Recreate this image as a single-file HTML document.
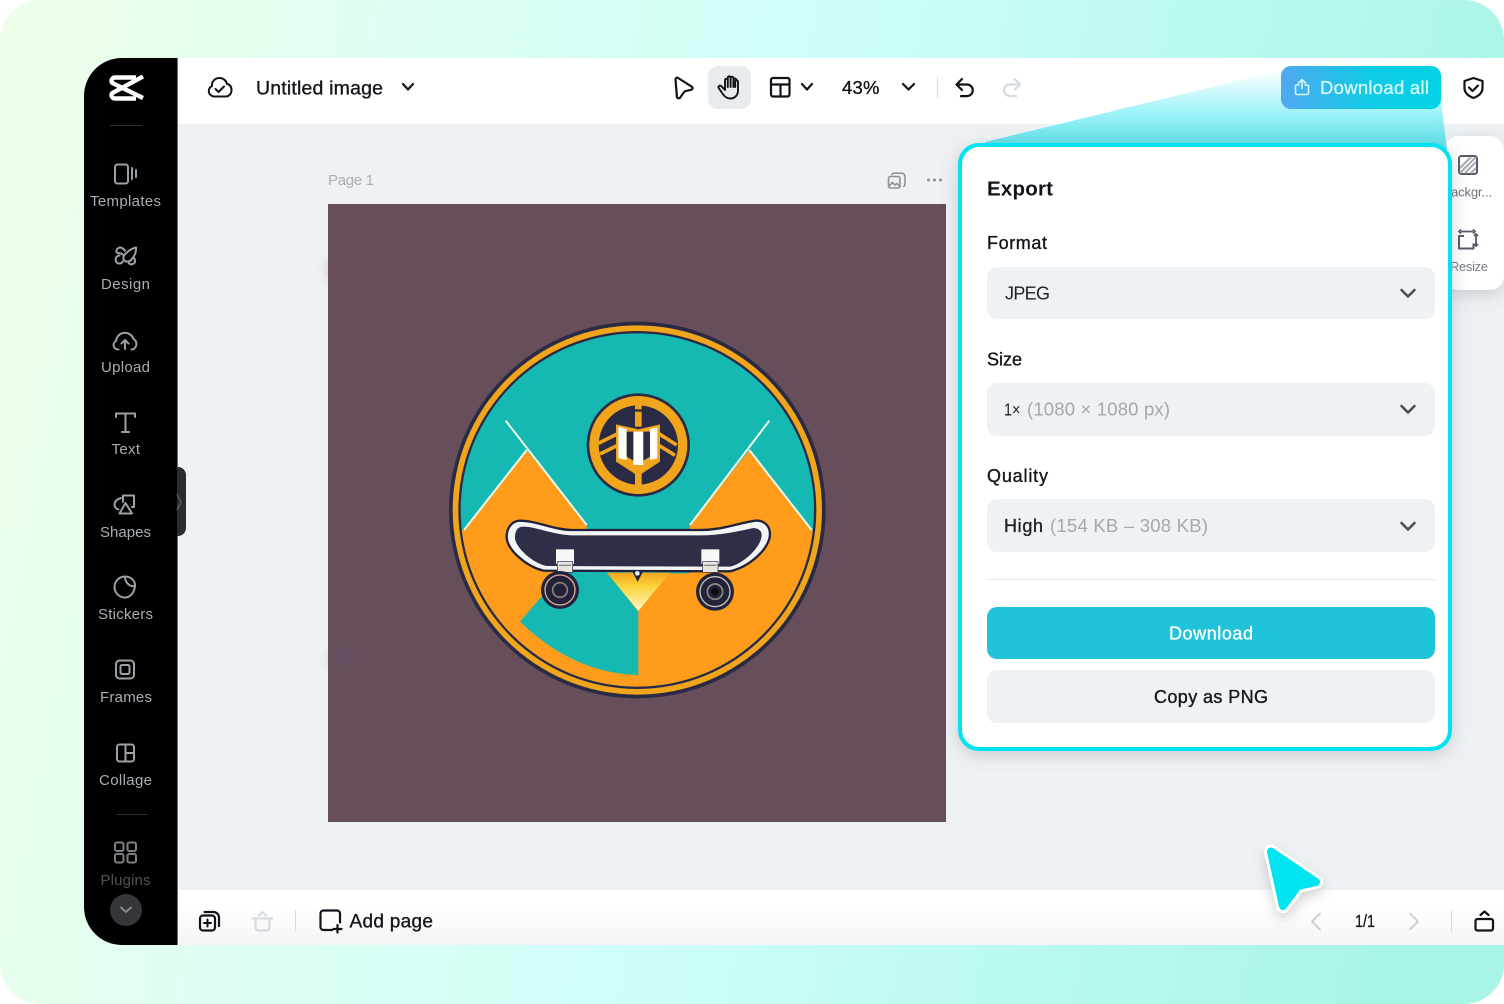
<!DOCTYPE html>
<html lang="en"><head><meta charset="utf-8"><title>Export</title>
<style>
html,body{margin:0;padding:0;background:#fff;width:1504px;height:1004px;overflow:hidden}
svg{display:block}
text{font-family:"Liberation Sans",sans-serif;white-space:pre}
.s{font-size:15px;fill:#a8aeb4}
.m{stroke:currentColor;stroke-width:.35px}
.i{fill:none;stroke:#9aa1a7;stroke-width:2;stroke-linecap:round;stroke-linejoin:round}
.k{fill:none;stroke:#11131a;stroke-width:2.2;stroke-linecap:round;stroke-linejoin:round}
.d{fill:none;stroke:#d5dbe1;stroke-width:2.2;stroke-linecap:round;stroke-linejoin:round}
.c{fill:none;stroke:#4a4e59;stroke-width:2.6;stroke-linecap:round;stroke-linejoin:round}
</style></head><body>
<svg width="1504" height="1004" viewBox="0 0 1504 1004" xmlns="http://www.w3.org/2000/svg">
<defs>
<linearGradient id="bg" x1="0" y1="0" x2="1504" y2="300" gradientUnits="userSpaceOnUse"><stop offset="0" stop-color="#eefee9"/><stop offset=".5" stop-color="#d0fff9"/><stop offset="1" stop-color="#a9f5e5"/></linearGradient>
<linearGradient id="bb" x1="0" y1="0" x2="0" y2="1"><stop offset=".3" stop-color="#fff"/><stop offset="1" stop-color="#f4f4f5"/></linearGradient>
<linearGradient id="fn" x1="0" y1="72" x2="0" y2="146" gradientUnits="userSpaceOnUse"><stop offset="0" stop-color="#fbffff"/><stop offset=".5" stop-color="#a6f5fa"/><stop offset="1" stop-color="#5fdfe9"/></linearGradient>
<linearGradient id="btn" x1="0" y1="0" x2="1" y2="0"><stop offset="0" stop-color="#50a8f0"/><stop offset=".55" stop-color="#10cbe6"/><stop offset="1" stop-color="#00d2e6"/></linearGradient>
<linearGradient id="yl" x1="0" y1="0" x2="0" y2="1"><stop offset="0" stop-color="#f1a51c"/><stop offset=".35" stop-color="#fbd23a"/><stop offset="1" stop-color="#fff8c4"/></linearGradient>
<clipPath id="cin"><circle cx="592" cy="600" r="530"/></clipPath>
<clipPath id="page"><rect width="1504" height="1004" rx="40"/></clipPath>
<filter id="sh" x="-20%" y="-20%" width="140%" height="140%"><feDropShadow dx="0" dy="4" stdDeviation="9" flood-color="#5a6470" flood-opacity=".28"/></filter>
<filter id="sh2" x="-40%" y="-40%" width="180%" height="180%"><feDropShadow dx="0" dy="5" stdDeviation="6" flood-color="#5a6470" flood-opacity=".3"/></filter>
<filter id="bl"><feGaussianBlur stdDeviation=".45"/></filter>
<filter id="bl2" x="-100%" y="-100%" width="300%" height="300%"><feGaussianBlur stdDeviation="6"/></filter>
</defs>
<g clip-path="url(#page)">
<rect width="1504" height="1004" fill="url(#bg)"/>
<!-- app -->
<rect x="170" y="58" width="1334" height="887" fill="#eff2f5"/>
<rect x="177" y="58" width="1327" height="66" fill="#fff"/>
<rect x="177" y="890" width="1327" height="55" fill="url(#bb)"/>
<path d="M122 58H177V945H122A38 38 0 0 1 84 907V96A38 38 0 0 1 122 58Z" fill="#000"/>
<rect x="177" y="58" width="1" height="887" fill="#6d7074"/>
<path d="M177 467h1a8 8 0 0 1 8 8v53a8 8 0 0 1-8 8h-1z" fill="#2b2c2e"/>
<path d="M177 494l4 8-4 8" fill="none" stroke="#55585c" stroke-width="1.6"/>

<!-- logo -->
<g fill="none" stroke="#fff" stroke-width="4.4" stroke-linejoin="round" stroke-linecap="butt">
<path d="M136 77.500H115a3.500 3.500 0 0 0-3.500 3.500c0 1 .5 1.800 1.500 2.300L143 98"/>
<path d="M136 98.500H115a3.500 3.500 0 0 1-3.500-3.500c0-1 .5-1.800 1.500-2.300L143 76.500"/>
</g>
<rect x="110" y="125" width="32" height="1" fill="#2e2f31"/>
<rect x="116" y="814" width="32" height="1" fill="#2e2f31"/>

<!-- sidebar icons -->
<rect class="i" x="115" y="164.500" width="13" height="19" rx="2.500"/>
<path class="i" d="M132 168v11M136 170v7"/>
<g class="i">
<path d="M124 255.500l-1.500-1.200c-2.500-2-5.500-.2-6-2.500-.5-2.800 2.500-5 5-4 1.800.7 2.700 1.800 3.500 3"/>
<path d="M136 247.500c.4 4-1.200 8.500-4.800 12.300-2.200 2.300-5.200 2.200-6.800.7s-1.300-4.300.8-6.400c3.200-3.400 6.800-5.800 10.800-6.600z"/>
<path d="M119.500 255.500c-2.800.5-4 2.300-3.800 4.500.2 2.500 2.200 3.800 4.300 3.500 1.400-.2 2.300-1 2.800-2M128.500 262.500c.7 1.400 2 2 3.500 1.800 2.300-.3 3.500-2.200 3-4.200-.2-1-.8-1.700-1.500-2.100"/>
</g>
<path class="i" d="M118.500 349.500h-.5a4.500 4.500 0 0 1-2-8.500 9 9 0 0 1 17.500-2 5.800 5.800 0 0 1 -1 10.500h-1M125 349v-9M121.500 343.500l3.500-3.500 3.500 3.500"/>
<path class="i" d="M116 417v-3.500h19v3.500M125.500 413.500v18.500M122 432h7"/>
<path class="i" d="M121 498c-4 1-6.500 4-6.500 6.500 0 2.500 1.800 4.300 4 5M123 502v-6.500h11v11.500h-2M125.500 503l-6 10.500h12.500z"/>
<path class="i" d="M135 586c.5-5.500-4.500-9.500-10-9.500a10.500 10.500 0 1 0 0 21c4 0 9-3 10-11.500zM125 576.500c0 5 3.500 10.500 10 9.500"/>
<rect class="i" x="116" y="660.500" width="18" height="18" rx="3.500"/>
<rect class="i" x="120.500" y="665" width="9" height="9" rx="1.500"/>
<rect class="i" x="117" y="744.500" width="17" height="17" rx="2.500"/>
<path class="i" d="M125.500 744.500v17M125.500 753H134"/>
<g class="i" stroke="#8a9096" opacity=".8">
<rect x="115" y="842.500" width="8.500" height="8.500" rx="1.800"/><rect x="127.500" y="842.500" width="8.500" height="8.500" rx="1.800"/>
<rect x="115" y="854" width="8.500" height="8.500" rx="1.800"/><rect x="127.500" y="854" width="8.500" height="8.500" rx="1.800"/>
</g>

<!-- sidebar labels -->
<text class="s" x="90" y="206" textLength="71" lengthAdjust="spacing">Templates</text>
<text class="s" x="101" y="289" textLength="49" lengthAdjust="spacing">Design</text>
<text class="s" x="101" y="372" textLength="49" lengthAdjust="spacing">Upload</text>
<text class="s" x="111.500" y="454" textLength="28.500" lengthAdjust="spacing">Text</text>
<text class="s" x="100" y="537" textLength="51" lengthAdjust="spacing">Shapes</text>
<text class="s" x="98" y="619" textLength="55" lengthAdjust="spacing">Stickers</text>
<text class="s" x="100" y="702" textLength="52" lengthAdjust="spacing">Frames</text>
<text class="s" x="99" y="785" textLength="53" lengthAdjust="spacing">Collage</text>
<text class="s" x="100.500" y="885" textLength="50" lengthAdjust="spacing" style="fill:#4e5155">Plugins</text>
<circle cx="126" cy="910" r="16" fill="#34363b"/>
<path d="M121 907.500l5 4.500 5-4.500" fill="none" stroke="#8f9499" stroke-width="1.800" stroke-linecap="round" stroke-linejoin="round"/>

<!-- top bar -->
<path class="k" style="stroke-width:2" d="M214 96.500a5.500 5.500 0 0 1-2-10.500c-.5-4 2.500-8 7.500-8 3.800 0 6.700 2.500 7.500 6 3 .5 4.500 3 4.500 6.300 0 3.500-2.500 6.200-5.500 6.200zM215.500 89l3 3 5.500-5.500"/>
<text x="256" y="94.500" font-size="19.500" fill="#14161c" class="m" color="#14161c" textLength="127" lengthAdjust="spacing">Untitled image</text>
<path class="k" d="M403 84l5 5.500 5-5.500"/>

<path class="k" d="M675.500 79.500c0-1.500 1.300-2.300 2.600-1.500l13.500 8.600c1.500 1 1.200 2.800-.5 3.200l-5.400 1.300c-.8.200-1.400.6-1.800 1.300l-3.600 5c-1 1.500-3.200 1-3.400-.8z"/>
<rect x="708" y="66" width="43" height="43" rx="10" fill="#e8ecef"/>
<path class="k" style="stroke-width:1.900" d="M725 90l-3.700-3.800c-1.500-1.500-3.700.2-2.500 2l4 5.800c1.800 2.700 4 4.500 7.500 4.500 4.700 0 7.700-3.500 7.700-8V82c0-2.200-2.800-2.200-2.800 0v5M725 90V80.500c0-2.200 2.800-2.200 2.800 0V87M727.800 87V78c0-2.200 2.800-2.200 2.800 0v9M730.600 87V78.500c0-2.200 2.800-2.200 2.800 0V87M733.400 87V80c0-2 2.800-2 2.800 0"/>
<rect class="k" x="771" y="78" width="18.500" height="18.500" rx="2"/>
<path class="k" d="M771 84.500h18.500M780.500 84.500v12"/>
<path class="k" d="M802 84l5 5.500 5-5.500"/>
<text x="842" y="94" font-size="18.500" fill="#14161c" class="m" color="#14161c" textLength="37.500" lengthAdjust="spacing">43%</text>
<path class="k" d="M903 84l5.500 5.500 5.500-5.500"/>
<rect x="937" y="77" width="1" height="21" fill="#d5dbe1"/>
<path class="k" d="M962 79l-5.500 5.500 5.500 5.500M957 84.500h10a5.800 5.800 0 0 1 0 11.600h-6"/>
<path class="d" d="M1014.500 79l5.500 5.500-5.500 5.500M1020 84.500h-10a5.800 5.800 0 0 0 0 11.600h6"/>

<!-- canvas -->
<text x="328" y="185" font-size="15" fill="#a7afb7" textLength="46" lengthAdjust="spacing">Page 1</text>
<g fill="none" stroke="#8b939c" stroke-width="1.600" stroke-linecap="round" stroke-linejoin="round">
<rect x="888.500" y="176.500" width="11.500" height="11.500" rx="2"/>
<path d="M892 174.500c.3-.8 1-1.300 2-1.300h7.500c2 0 3.500 1.500 3.500 3.500v7.500c0 1-.5 1.800-1.300 2.100"/>
<path d="M889 186l3.500-3.500 2.500 2.500 2-1.500 2.500 2.500"/>
</g>
<circle cx="928.500" cy="180" r="1.500" fill="#868e96"/><circle cx="934.500" cy="180" r="1.500" fill="#868e96"/><circle cx="940.500" cy="180" r="1.500" fill="#868e96"/>

<rect x="328" y="204" width="618" height="618" fill="#664e5a"/>
<circle cx="336" cy="270" r="9" fill="#7a4c58" opacity=".35" filter="url(#bl2)"/>
<circle cx="340" cy="658" r="9" fill="#5f5a72" opacity=".45" filter="url(#bl2)"/>
<g transform="translate(440 310) scale(.33333)" filter="url(#bl)">
<circle cx="592" cy="600" r="565" fill="#2b2a45"/>
<circle cx="592" cy="600" r="554" fill="#f1a51c"/>
<circle cx="592" cy="600" r="537" fill="#2b2a45"/>
<g clip-path="url(#cin)">
<rect width="1200" height="1200" fill="#14b8b2"/>
<path d="M260 420L440 645V790H750V645L928 420 1115 660H1200V1200H0V660H72Z" fill="#ff9c1c"/>
<path d="M300 865L390 785H500L595 905V1095Q400 1090 240 935Z" fill="#14b8b2"/>
<path d="M500 788H690L595 903Z" fill="url(#yl)"/>
<path d="M197 332L440 645M72 660L260 420M988 332L750 645M928 420L1115 660" stroke="#e9f9ee" stroke-width="6" fill="none"/>
</g>
<!-- emblem -->
<g transform="translate(420 240)">
<circle cx="175" cy="165" r="155" fill="#2b2a45"/>
<circle cx="175" cy="165" r="147" fill="#f1a51c"/>
<circle cx="175" cy="165" r="119" fill="#2b2a45"/>
<path d="M175 30V110M175 245V312" stroke="#f1a51c" stroke-width="20"/>
<rect x="162" y="58" width="26" height="7" fill="#2b2a45"/>
<path d="M55 160L115 130M60 192L115 165M235 130L290 165M235 165L285 196" stroke="#f1a51c" stroke-width="11" fill="none"/>
<path d="M108 103L175 118 240 103V215L175 258 108 215Z" fill="#f1a51c"/>
<path d="M115 110L140 117V210L115 205Z M160 125H190V225H160Z M210 117L232 112V205L210 210Z" fill="#fdfdfa"/>
<path d="M140 125H160V212L140 200ZM190 125H210V200L190 212Z" fill="#2b2a45"/>
</g>
<!-- skateboard -->
<path d="M240 632C215 632 200 655 200 680C200 720 260 770 310 782L870 784C930 770 990 715 990 672C990 645 970 630 945 632C890 640 850 660 780 660L400 660C340 660 290 632 240 632Z" fill="#f2f5f6" stroke="#23223a" stroke-width="7"/>
<path d="M250 650C228 650 225 670 225 685C228 715 280 760 320 768L870 770C910 762 965 710 965 675C965 660 950 652 935 655C890 665 840 676 780 676L400 676C340 676 290 650 250 650Z" fill="#2f2d47"/>
<path d="M578 786h30l-15 30z" fill="#23223a"/><circle cx="592" cy="790" r="7" fill="#dff2f5"/>
<rect x="348" y="718" width="54" height="44" fill="#f7f7f7"/><rect x="352" y="755" width="46" height="32" fill="#e8e4df" stroke="#2b2a45" stroke-width="2"/><rect x="357" y="764" width="36" height="4" fill="#8a8580"/>
<rect x="784" y="718" width="54" height="44" fill="#f7f7f7"/><rect x="788" y="755" width="46" height="32" fill="#e8e4df" stroke="#2b2a45" stroke-width="2"/><rect x="793" y="764" width="36" height="4" fill="#8a8580"/>
<circle cx="360" cy="840" r="57" fill="#23223a"/><circle cx="360" cy="840" r="45" fill="none" stroke="#d8ad9a" stroke-width="4"/><circle cx="360" cy="840" r="22" fill="none" stroke="#8d8379" stroke-width="5"/><circle cx="360" cy="840" r="10" fill="#25233a"/>
<circle cx="825" cy="845" r="57" fill="#23223a"/><circle cx="825" cy="845" r="45" fill="none" stroke="#c6c3b4" stroke-width="4"/><circle cx="825" cy="845" r="23" fill="none" stroke="#8d8b80" stroke-width="5"/><circle cx="825" cy="845" r="12" fill="#111"/>
</g>

<!-- right tool panel -->
<rect x="1444" y="136" width="60" height="154" rx="14" fill="#fff" filter="url(#sh)"/>
<rect x="1459" y="156" width="18" height="18" rx="2.500" fill="none" stroke="#555a66" stroke-width="2"/>
<path d="M1460 168l11-11M1460 173l16-16M1465 173l11-11M1471 173l5-5" stroke="#a6abb3" stroke-width="2"/>
<text x="1451" y="196.500" font-size="13" fill="#6b7079" textLength="41" lengthAdjust="spacing">ackgr...</text>
<path d="M1464 236h-5v12.500h14.500v-5" fill="none" stroke="#555a66" stroke-width="2" stroke-linejoin="round"/>
<path d="M1461 231.500h12M1461 229.500l-2 2 2 2M1473 229.500l2 2-2 2M1476 234v12M1474 236l2-2 2 2M1474 244l2 2 2-2" fill="none" stroke="#555a66" stroke-width="1.800"/>
<text x="1450" y="271" font-size="13" fill="#7b8087" textLength="38" lengthAdjust="spacing">Resize</text>

<!-- funnel and download button -->
<path d="M985 142L1270 73 1290 70 1441 100 1447 150H985Z" fill="url(#fn)"/>
<rect x="1281" y="66" width="160" height="43" rx="10" fill="url(#btn)"/>
<path d="M1302 88.500v-8.500M1298.500 83l3.500-3.500 3.500 3.500M1299 85h-2.500a1 1 0 0 0-1 1v7a1.500 1.500 0 0 0 1.500 1.500h10a1.500 1.500 0 0 0 1.500-1.500v-7a1 1 0 0 0-1-1H1305" fill="none" stroke="#d4f7fb" stroke-width="1.600" stroke-linecap="round" stroke-linejoin="round"/>
<text x="1320" y="94" font-size="18.500" fill="#d3f7fb" class="m" color="#d3f7fb" textLength="109" lengthAdjust="spacing">Download all</text>
<path class="k" d="M1473.500 78l9 3v7c0 5-3.800 8-9 10-5.200-2-9-5-9-10v-7zM1469 87.500l3.500 3.500 5.500-5.500"/>

<!-- export panel -->
<rect x="960" y="145" width="490" height="604" rx="19" fill="#fff" stroke="#00e3f0" stroke-width="4" filter="url(#sh)"/>
<text x="987" y="195.500" font-size="20.500" font-weight="700" fill="#11131a" textLength="66" lengthAdjust="spacing">Export</text>
<text x="987" y="249" font-size="18" fill="#14161c" class="m" color="#14161c" textLength="60" lengthAdjust="spacing">Format</text>
<rect x="987" y="267" width="448" height="52" rx="10" fill="#eff2f5"/>
<text x="1005" y="299.500" font-size="18" fill="#1d2027" textLength="45" lengthAdjust="spacing">JPEG</text>
<path class="c" d="M1401.500 290l6.500 6.500 6.500-6.500"/>
<text x="987" y="365.500" font-size="18" fill="#14161c" class="m" color="#14161c" textLength="35" lengthAdjust="spacing">Size</text>
<rect x="987" y="383" width="448" height="53" rx="10" fill="#eff2f5"/>
<text transform="translate(1004 415.500) scale(.8 1)" font-size="18" fill="#1d2027">1×</text>
<text x="1027" y="415.500" font-size="18.500" fill="#a0a8b0" textLength="143" lengthAdjust="spacing">(1080 × 1080 px)</text>
<path class="c" d="M1401.500 406l6.500 6.500 6.500-6.500"/>
<text x="987" y="482" font-size="18" fill="#14161c" class="m" color="#14161c" textLength="61" lengthAdjust="spacing">Quality</text>
<rect x="987" y="499" width="448" height="53" rx="10" fill="#eff2f5"/>
<text x="1004" y="532" font-size="18" fill="#1d2027" class="m" color="#1d2027" textLength="39" lengthAdjust="spacing">High</text>
<text x="1050" y="532" font-size="18.500" fill="#a0a8b0" textLength="158" lengthAdjust="spacing">(154 KB – 308 KB)</text>
<path class="c" d="M1401.500 523l6.500 6.500 6.500-6.500"/>
<rect x="987" y="579" width="448" height="1" fill="#e3e6e9"/>
<rect x="987" y="607" width="448" height="52" rx="10" fill="#20c4da"/>
<text x="1169" y="639.500" font-size="18" fill="#fff" class="m" color="#fff" textLength="84" lengthAdjust="spacing">Download</text>
<rect x="987" y="670" width="448" height="53" rx="10" fill="#eff2f5"/>
<text x="1154" y="703" font-size="18" fill="#14161c" class="m" color="#14161c" textLength="114" lengthAdjust="spacing">Copy as PNG</text>

<!-- bottom bar -->
<rect class="k" x="200" y="915.500" width="15" height="15" rx="3"/>
<path class="k" d="M207.500 919.500v7M204 923h7" style="stroke-width:2"/>
<path class="k" d="M204.500 912h9c3 0 5.500 2.500 5.500 5.500v8.500"/>
<path class="d" d="M252.500 918.500h20M259 915.500l3.500-3.500 3.500 3.500M255.500 918.500v9a3 3 0 0 0 3 3h8a3 3 0 0 0 3-3v-9"/>
<rect x="295" y="910" width="1" height="21" fill="#d5dbe1"/>
<path class="k" d="M332 930h-8.500a3 3 0 0 1-3-3v-13.500a3 3 0 0 1 3-3h13.500a3 3 0 0 1 3 3v9M337.500 925v7.500M333.500 929h8"/>
<text x="349.500" y="927.500" font-size="19" fill="#14161c" class="m" color="#14161c" textLength="83.500" lengthAdjust="spacing">Add page</text>
<path d="M1320 913.500l-8 8 8 8" fill="none" stroke="#c6ccd3" stroke-width="1.800" stroke-linecap="round" stroke-linejoin="round"/>
<path d="M1410 913.500l8 8-8 8" fill="none" stroke="#c6ccd3" stroke-width="1.800" stroke-linecap="round" stroke-linejoin="round"/>
<text transform="translate(1355 927) scale(.8 1)" font-size="18" fill="#14161c" class="m" color="#14161c">1/1</text>
<rect x="1451" y="910" width="1" height="22" fill="#d5dbe1"/>
<rect class="k" x="1475.500" y="919" width="17.500" height="11.500" rx="2"/>
<path class="k" d="M1480.500 915l4-3.500 4 3.500"/>

<!-- cursor -->
<g filter="url(#sh2)" stroke-linejoin="round">
<path d="M1271 851.500L1316 882 1298 886 1283 906Z" fill="#fff" stroke="#fff" stroke-width="14"/>
<path d="M1271 851.500L1316 882 1298 886 1283 906Z" fill="#00e3f0" stroke="#00e3f0" stroke-width="8"/>
</g>
</g>
</svg>
</body></html>
